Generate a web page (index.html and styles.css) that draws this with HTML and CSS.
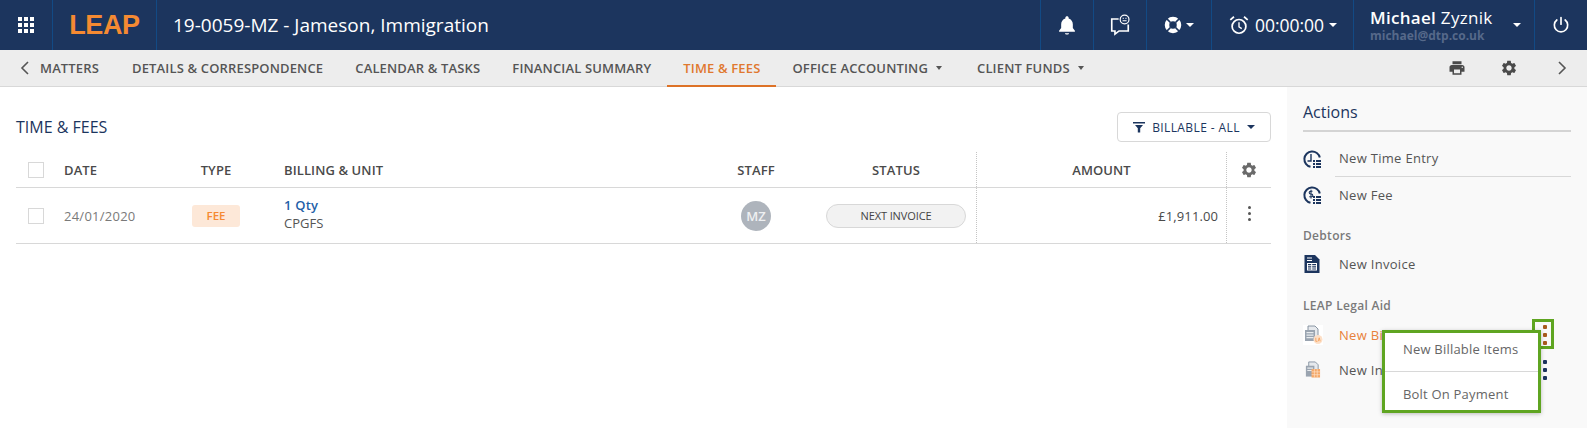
FILE: index.html
```html
<!DOCTYPE html>
<html lang="en">
<head>
<meta charset="utf-8">
<title>Time &amp; Fees</title>
<link rel="stylesheet" href="styles.css">
</head>
<body>
<svg class="defs" width="0" height="0" aria-hidden="true">
  <symbol id="gear" viewBox="0 0 24 24"><path d="M19.14 12.94c.04-.3.06-.61.06-.94 0-.32-.02-.64-.07-.94l2.03-1.58c.18-.14.23-.41.12-.61l-1.92-3.32c-.12-.22-.37-.29-.59-.22l-2.39.96c-.5-.38-1.03-.7-1.62-.94l-.36-2.54c-.04-.24-.24-.41-.48-.41h-3.84c-.24 0-.43.17-.47.41l-.36 2.54c-.59.24-1.13.57-1.62.94l-2.39-.96c-.22-.08-.47 0-.59.22L2.74 8.87c-.12.21-.08.47.12.61l2.03 1.58c-.05.3-.09.63-.09.94s.02.64.07.94l-2.03 1.58c-.18.14-.23.41-.12.61l1.92 3.32c.12.22.37.29.59.22l2.39-.96c.5.38 1.03.7 1.62.94l.36 2.54c.05.24.24.41.48.41h3.84c.24 0 .44-.17.47-.41l.36-2.54c.59-.24 1.13-.56 1.62-.94l2.39.96c.22.08.47 0 .59-.22l1.92-3.32c.12-.22.07-.47-.12-.61l-2.01-1.58zM12 15.6c-1.98 0-3.6-1.62-3.6-3.6s1.62-3.6 3.6-3.6 3.6 1.62 3.6 3.6-1.62 3.6-3.6 3.6z" fill="currentColor"/></symbol>
</svg>

<header class="topbar">
  <div class="cell cell-apps">
    <svg class="ic-apps" viewBox="0 0 16 16"><path d="M0 0h4v4H0zM6 0h4v4H6zM12 0h4v4h-4zM0 6h4v4H0zM6 6h4v4H6zM12 6h4v4h-4zM0 12h4v4H0zM6 12h4v4H6zM12 12h4v4h-4z" fill="#fff"/></svg>
  </div>
  <div class="cell cell-logo"><span class="logo">LEAP</span></div>
  <div class="matter-title">19-0059-MZ - Jameson, Immigration</div>
  <div class="cell cell-icon">
    <svg class="ic-20" viewBox="0 0 24 24"><path d="M12 23.500c1.500 0 2.500-.7 2.500-1.700H9.500c0 1 1 1.700 2.500 1.700zM19 15.500V11c0-3.300-1.900-6-5-6.900V3.400C14 2.300 13.100 1.500 12 1.500s-2 .8-2 1.900v.7C6.900 5 5 7.700 5 11v4.500L2.500 19v1h19v-1z" fill="#fff"/></svg>
  </div>
  <div class="cell cell-icon">
    <svg class="ic-22" viewBox="0 0 24 24" fill="none" stroke="#fff" stroke-width="1.800"><path d="M10.500 5.500H3v13h3.500v3.500l4.500-3.500h10v-7"/><circle cx="17" cy="6" r="4.800" stroke-width="1.300"/><path d="M15 4.800h1M18 4.800h1M14.800 7.300h4.400" stroke-width="1.200"/></svg>
  </div>
  <div class="cell cell-help">
    <svg class="ic-18" viewBox="0 0 24 24"><circle cx="12" cy="12" r="8" fill="none" stroke="#fff" stroke-width="6"/><path d="M3.500 3.500l5 5M20.500 3.500l-5 5M3.500 20.500l5-5M20.500 20.500l-5-5" stroke="#1c355e" stroke-width="2"/></svg>
    <span class="caret caret-white"></span>
  </div>
  <div class="cell cell-timer">
    <svg class="ic-22" viewBox="0 0 24 24" fill="none" stroke="#fff" stroke-width="1.900"><circle cx="12" cy="13.500" r="7.500"/><path d="M12 9v5l3 2" stroke-width="1.500"/><path d="M2.500 6.500L6.500 3M21.500 6.500L17.500 3"/></svg>
    <span class="timer-text">00:00:00</span>
    <span class="caret caret-white"></span>
  </div>
  <div class="cell cell-user">
    <div class="user-text">
      <div class="user-name"><strong>Michael</strong> Zyznik</div>
      <div class="user-mail">michael@dtp.co.uk</div>
    </div>
    <span class="caret caret-white"></span>
  </div>
  <div class="cell cell-icon cell-power">
    <svg class="ic-20" viewBox="0 0 24 24" fill="none" stroke="#fff" stroke-width="2" stroke-linecap="round"><path d="M12 3v8M7 6a8 8 0 1 0 10 0"/></svg>
  </div>
</header>

<nav class="subnav">
  <svg class="chev chev-left" viewBox="0 0 10 16"><path d="M8 2L2 8l6 6" fill="none" stroke="#555" stroke-width="1.600"/></svg>
  <a class="tab tab-first">Matters</a>
  <a class="tab">Details &amp; Correspondence</a>
  <a class="tab">Calendar &amp; Tasks</a>
  <a class="tab">Financial Summary</a>
  <a class="tab tab-active">Time &amp; Fees</a>
  <a class="tab">Office Accounting<span class="caret caret-grey"></span></a>
  <a class="tab">Client Funds<span class="caret caret-grey"></span></a>
  <div class="subnav-tools">
    <svg class="tool" viewBox="0 0 24 24"><path d="M19 8H5c-1.660 0-3 1.340-3 3v6h4v4h12v-4h4v-6c0-1.660-1.340-3-3-3zm-3 11H8v-5h8v5zm3-7c-.55 0-1-.45-1-1s.45-1 1-1 1 .45 1 1-.45 1-1 1zm-1-9H6v4h12V3z" fill="#4a4a4a"/></svg>
    <svg class="tool tool-gear"><use href="#gear"/></svg>
    <svg class="chev chev-right" viewBox="0 0 10 16"><path d="M2 2l6 6-6 6" fill="none" stroke="#555" stroke-width="1.600"/></svg>
  </div>
</nav>

<div class="page">
  <main class="main">
    <div class="main-head">
      <h1 class="main-title">Time &amp; Fees</h1>
      <button class="filter-btn">
        <svg class="ic-filter" viewBox="0 0 12 12"><path d="M0 1h12v1.500H0zM2 4h8L7.200 7.200V11.500H4.800V7.200z" fill="#1c355e"/></svg>
        <span>Billable - All</span>
        <span class="caret caret-navy"></span>
      </button>
    </div>
    <div class="table">
      <div class="tr th">
        <div class="td td-check"><span class="checkbox"></span></div>
        <div class="td">Date</div>
        <div class="td td-center">Type</div>
        <div class="td td-billing">Billing &amp; Unit</div>
        <div class="td td-center">Staff</div>
        <div class="td td-center">Status</div>
        <div class="td td-center td-dotted">Amount</div>
        <div class="td td-center td-dotted"><svg class="ic-gear-sm"><use href="#gear"/></svg></div>
      </div>
      <div class="tr tb">
        <div class="td td-check"><span class="checkbox"></span></div>
        <div class="td td-date">24/01/2020</div>
        <div class="td td-center"><span class="badge">Fee</span></div>
        <div class="td td-billing td-billing-body">
          <div class="qty">1 Qty</div>
          <div class="code">CPGFS</div>
        </div>
        <div class="td td-center"><span class="avatar">MZ</span></div>
        <div class="td td-center"><span class="pill">Next Invoice</span></div>
        <div class="td td-amount td-dotted">£1,911.00</div>
        <div class="td td-center td-dotted td-kebab"><span class="kebab kebab-grey"><i></i><i></i><i></i></span></div>
      </div>
    </div>
  </main>

  <aside class="side">
    <h2 class="side-title">Actions</h2>
    <ul class="act-list">
      <li class="act">
        <svg class="act-ic" viewBox="0 0 18 18"><path d="M7.500 16.800A7.800 7.800 0 1 1 16.800 7.500" fill="none" stroke="#1c355e" stroke-width="2"/><path d="M8 4v7H4.500" fill="none" stroke="#1c355e" stroke-width="1.400"/><path d="M10 10h2v2h-2zM13 10h5v2h-5zM10 13h2v2h-2zM13 13h5v2h-5zM10 16h2v2h-2zM13 16h5v2h-5z" fill="#1c355e"/></svg>
        <span class="act-text act-rule">New Time Entry</span>
      </li>
      <li class="act act-fee">
        <svg class="act-ic" viewBox="0 0 18 18"><path d="M7.500 16.800A7.800 7.800 0 1 1 16.800 7.500" fill="none" stroke="#1c355e" stroke-width="2"/><path d="M9.500 5.200H7.600a1.300 1.300 0 0 0 0 2.800h.8a1.300 1.300 0 0 1 0 2.800H6.200M8 3.800v8.600" fill="none" stroke="#1c355e" stroke-width="1.100"/><path d="M10 10h2v2h-2zM13 10h5v2h-5zM10 13h2v2h-2zM13 13h5v2h-5zM10 16h2v2h-2zM13 16h5v2h-5z" fill="#1c355e"/></svg>
        <span class="act-text">New Fee</span>
      </li>
    </ul>
    <h3 class="side-group">Debtors</h3>
    <ul class="act-list">
      <li class="act act-fee">
        <svg class="act-ic" viewBox="0 0 18 18"><path d="M1.500 0H12l4.500 4.500V18H1.500z" fill="#1c355e"/><path d="M4 2.500h5v1H4zM4 5h5v1H4z" fill="#fff"/><path fill-rule="evenodd" d="M4 8h10v7.500H4zM5 9v1.300h3.200V9zM9.200 9v1.300H13V9zM5 11.300v1.200h3.200v-1.200zM9.200 11.300v1.200H13v-1.200zM5 13.500v1h3.200v-1zM9.200 13.500v1H13v-1z" fill="#fff"/></svg>
        <span class="act-text">New Invoice</span>
      </li>
    </ul>
    <h3 class="side-group side-group-aid">LEAP Legal Aid</h3>
    <ul class="act-list">
      <li class="act act-tight act-hot">
        <svg class="act-ic act-ic-aid" viewBox="0 0 20 20"><path d="M5 1h7l3 3v8H5z" fill="#e6e9ed" stroke="#7d8a99" stroke-width=".9"/><path d="M2 5h10v11H2z" fill="#9aa4b0"/><path d="M3.500 7h7v1.200h-7zM3.500 9.500h7v1.200h-7zM3.500 12h7v1.200h-7z" fill="#e8ebee"/><circle cx="15" cy="14.500" r="4.500" fill="#fde0c8"/><path d="M12.800 12.800v3.500h1.600M15.200 16.300l1-3.500 1 3.500" fill="none" stroke="#f59a50" stroke-width=".8"/></svg>
        <span class="act-text">New Bi</span>
        <span class="kebab kebab-hot"><i></i><i></i><i></i></span>
      </li>
      <li class="act act-tight">
        <svg class="act-ic act-ic-small" viewBox="0 0 18 18"><path d="M5 1h7l3 3v5H5z" fill="#e6e9ed" stroke="#7d8a99" stroke-width=".9"/><path d="M2 5h9v11.500H2z" fill="#9aa4b0"/><path d="M3.500 7h6v1.200h-6zM3.500 9.500h6v1.200h-6z" fill="#e8ebee"/><rect x="8" y="8.500" width="9" height="9" fill="#f5a868"/><path d="M8 11.500h9M8 14.500h9M11 8.500v9M14 8.500v9" stroke="#fde3cd" stroke-width=".7"/></svg>
        <span class="act-text">New In</span>
        <span class="kebab kebab-navy"><i></i><i></i><i></i></span>
      </li>
    </ul>
    <span class="hilite"></span>
    <div class="menu">
      <div class="menu-item menu-item-first">New Billable Items</div>
      <div class="menu-item menu-item-last">Bolt On Payment</div>
    </div>
  </aside>
</div>
</body>
</html>
```

FILE: styles.css
```css
* { box-sizing: border-box; }

html, body {
  margin: 0;
  padding: 0;
  height: 428px;
  overflow: hidden;
  background: #fff;
  font-family: "Open Sans", "Liberation Sans", sans-serif;
  color: #4a4a4a;
}

.defs { position: absolute; }

/* top bar */
.topbar {
  display: flex;
  align-items: stretch;
  height: 50px;
  background: #1c355e;
  color: #fff;
}
.cell {
  display: flex;
  align-items: center;
  justify-content: center;
  border-left: 1px solid #124a85;
}
.cell-apps { width: 52px; border-left: 0; }
.ic-apps { width: 16px; height: 16px; }
.cell-logo { width: 105px; border-right: 1px solid #124a85; }
.logo {
  font-family: "Liberation Sans", sans-serif;
  font-weight: 700;
  font-size: 27px;
  letter-spacing: -.4px;
  color: #f58a32;
}
.matter-title {
  flex: 1;
  display: flex;
  align-items: center;
  padding-left: 16px;
  font-size: 19px;
}
.cell-icon { width: 53px; }
.cell-help { width: 65px; gap: 4px; }
.cell-timer { width: 142px; gap: 5px; }
.cell-user {
  width: 181px;
  justify-content: flex-start;
  padding-left: 16px;
}
.cell-power { width: 53px; }
.ic-18 { width: 18px; height: 18px; }
.ic-20 { width: 20px; height: 20px; }
.ic-22 { width: 22px; height: 22px; }
.timer-text { font-size: 17.500px; }
.user-text { width: 143px; }
.user-name { font-size: 17px; line-height: 21px; letter-spacing: .3px; }
.user-name strong { font-weight: 600; }
.user-mail {
  font-size: 12px;
  font-weight: 700;
  line-height: 16px;
  color: #56698a;
}

.caret {
  display: inline-block;
  width: 0;
  height: 0;
  border-left: 4px solid transparent;
  border-right: 4px solid transparent;
  border-top: 4px solid #fff;
}
.caret-grey { border-left-width: 3px; border-right-width: 3px; border-top-color: #555; margin-left: 8px; margin-right: 3px; vertical-align: 2px; }
.caret-navy { border-top-color: #1c355e; }

/* sub nav */
.subnav {
  display: flex;
  align-items: stretch;
  height: 37px;
  background: #ededed;
  border-bottom: 1px solid #d8d8d8;
  padding-left: 20px;
}
.chev { width: 10px; height: 16px; align-self: center; }
.tab {
  display: flex;
  align-items: center;
  padding: 0 16px;
  font-size: 13px;
  font-weight: 600;
  letter-spacing: .15px;
  text-transform: uppercase;
  color: #555;
  border-bottom: 2px solid transparent;
  margin-bottom: -1px;
}
.tab-first { padding-left: 10px; padding-right: 17px; }
.tab-active { color: #e0782f; border-bottom-color: #dd7227; }
.subnav-tools {
  margin-left: auto;
  display: flex;
  align-items: center;
  gap: 34px;
  padding-right: 20px;
}
.tool { width: 18px; height: 18px; }
.tool-gear { color: #4a4a4a; }
.chev-right { margin-left: 5px; }

/* page */
.page { display: flex; height: 341px; }
.main { width: 1287px; padding: 25px 16px 0; }
.main-head {
  display: flex;
  align-items: center;
  justify-content: space-between;
  height: 30px;
  margin-bottom: 9px;
}
.main-title {
  margin: 0;
  font-size: 16px;
  font-weight: 400;
  text-transform: uppercase;
  color: #1c355e;
}
.filter-btn {
  display: flex;
  align-items: center;
  justify-content: center;
  gap: 7px;
  width: 154px;
  height: 30px;
  padding: 0;
  background: #fff;
  border: 1px solid #d8d8d8;
  border-radius: 4px;
  font-family: inherit;
  font-size: 12px;
  font-weight: 400;
  letter-spacing: .4px;
  text-transform: uppercase;
  color: #1c355e;
}
.ic-filter { width: 12px; height: 12px; }

/* table */
.tr {
  display: grid;
  grid-template-columns: 48px 112px 80px 440px 120px 160px 250px 45px;
  border-bottom: 1px solid #d8d8d8;
}
.th {
  height: 37px;
  padding-top: 1px;
  font-size: 13px;
  font-weight: 600;
  letter-spacing: .1px;
  text-transform: uppercase;
  color: #4a4a4a;
}
.tb { height: 56px; font-size: 13px; }
.td { display: flex; align-items: center; }
.td-center { justify-content: center; }
.td-check { padding-left: 12px; }
.td-billing {
  flex-direction: column;
  align-items: flex-start;
  justify-content: center;
  padding-left: 28px;
}
.td-billing-body { padding-bottom: 4px; }
.td-dotted { border-left: 1px dotted #c4c4c4; }
.td-date { color: #7a7a7a; letter-spacing: .25px; }
.td-amount { justify-content: flex-end; padding-right: 8px; letter-spacing: .1px; }
.td-kebab { align-items: flex-start; padding-top: 18px; }
.checkbox {
  display: block;
  width: 16px;
  height: 16px;
  border: 1px solid #d8d8d8;
  background: #fff;
}
.ic-gear-sm { width: 18px; height: 18px; color: #6a6a6a; }
.badge {
  display: flex;
  align-items: center;
  justify-content: center;
  width: 48px;
  height: 22px;
  border-radius: 3px;
  background: #fde8d8;
  color: #f58a32;
  font-size: 11.500px;
  font-weight: 600;
  text-transform: uppercase;
}
.qty { font-weight: 600; font-size: 13px; line-height: 18px; color: #1f5fa8; letter-spacing: .2px; }
.code { font-size: 13px; line-height: 18px; color: #555; }
.avatar {
  display: flex;
  align-items: center;
  justify-content: center;
  width: 30px;
  height: 30px;
  border-radius: 50%;
  background: #aeb4bc;
  color: #eef0f2;
  font-size: 13px;
  font-weight: 600;
}
.pill {
  display: flex;
  align-items: center;
  justify-content: center;
  width: 140px;
  height: 24px;
  border: 1px solid #d8d8d8;
  border-radius: 12px;
  background: #f2f2f2;
  font-size: 11px;
  font-weight: 400;
  letter-spacing: -.1px;
  text-transform: uppercase;
  color: #444;
}
.kebab { display: flex; flex-direction: column; gap: 3px; }
.kebab i { display: block; width: 3px; height: 3px; border-radius: 50%; background: #555; }
.kebab-hot, .kebab-navy { gap: 4px; margin-left: auto; margin-right: 24px; }
.kebab-hot i, .kebab-navy i { width: 4px; height: 4px; border-radius: 1px; }
.kebab-hot i { background: #a85a1e; }
.kebab-navy i { background: #1c355e; }

/* sidebar */
.side {
  position: relative;
  width: 300px;
  background: #f9f9f9;
  padding: 12px 16px 0;
}
.side-title {
  margin: 0 0 8px;
  height: 33px;
  padding-bottom: 5px;
  border-bottom: 2px solid #d4d4d4;
  font-size: 16px;
  font-weight: 400;
  line-height: 26px;
  color: #1c355e;
}
.act-list { list-style: none; margin: 0; padding: 0; }
.act {
  display: flex;
  align-items: center;
  height: 37px;
  font-size: 13px;
  letter-spacing: .3px;
  color: #555;
}
.act-fee { height: 36px; }
.act-tight { height: 35px; }
.act-hot { color: #e8813a; }
.act-ic { flex: none; width: 18px; height: 18px; margin-right: 18px; }
.act-ic-aid { width: 20px; height: 20px; margin-right: 16px; background: #fff; }
.act-ic-small { margin-left: 1px; width: 17px; height: 17px; }
.act-text { display: flex; align-items: center; height: 100%; white-space: nowrap; }
.act-rule {
  flex: 1;
  margin-left: -4px;
  padding-left: 4px;
  border-bottom: 1px solid #d8d8d8;
}
.side-group {
  margin: 13px 0 0;
  font-size: 12px;
  font-weight: 600;
  line-height: 20px;
  letter-spacing: .3px;
  color: #7a7a7a;
}
.side-group-aid { margin-top: 14px; margin-bottom: 1px; }

/* menu + annotation */
.hilite {
  position: absolute;
  left: 245px;
  top: 232px;
  width: 22px;
  height: 30px;
  border: 3px solid #5fa521;
}
.menu {
  position: absolute;
  left: 95px;
  top: 243px;
  width: 159px;
  height: 83px;
  background: #fff;
  border: 3px solid #5fa521;
  box-shadow: 0 1px 4px rgba(0, 0, 0, .25);
  font-size: 13px;
  letter-spacing: .2px;
  color: #666;
}
.menu-item {
  display: flex;
  align-items: center;
  padding-left: 18px;
}
.menu-item-first {
  height: 39px;
  padding-bottom: 6px;
  border-bottom: 1px solid #d8d8d8;
}
.menu-item-last { height: 38px; padding-top: 6px; }
```
